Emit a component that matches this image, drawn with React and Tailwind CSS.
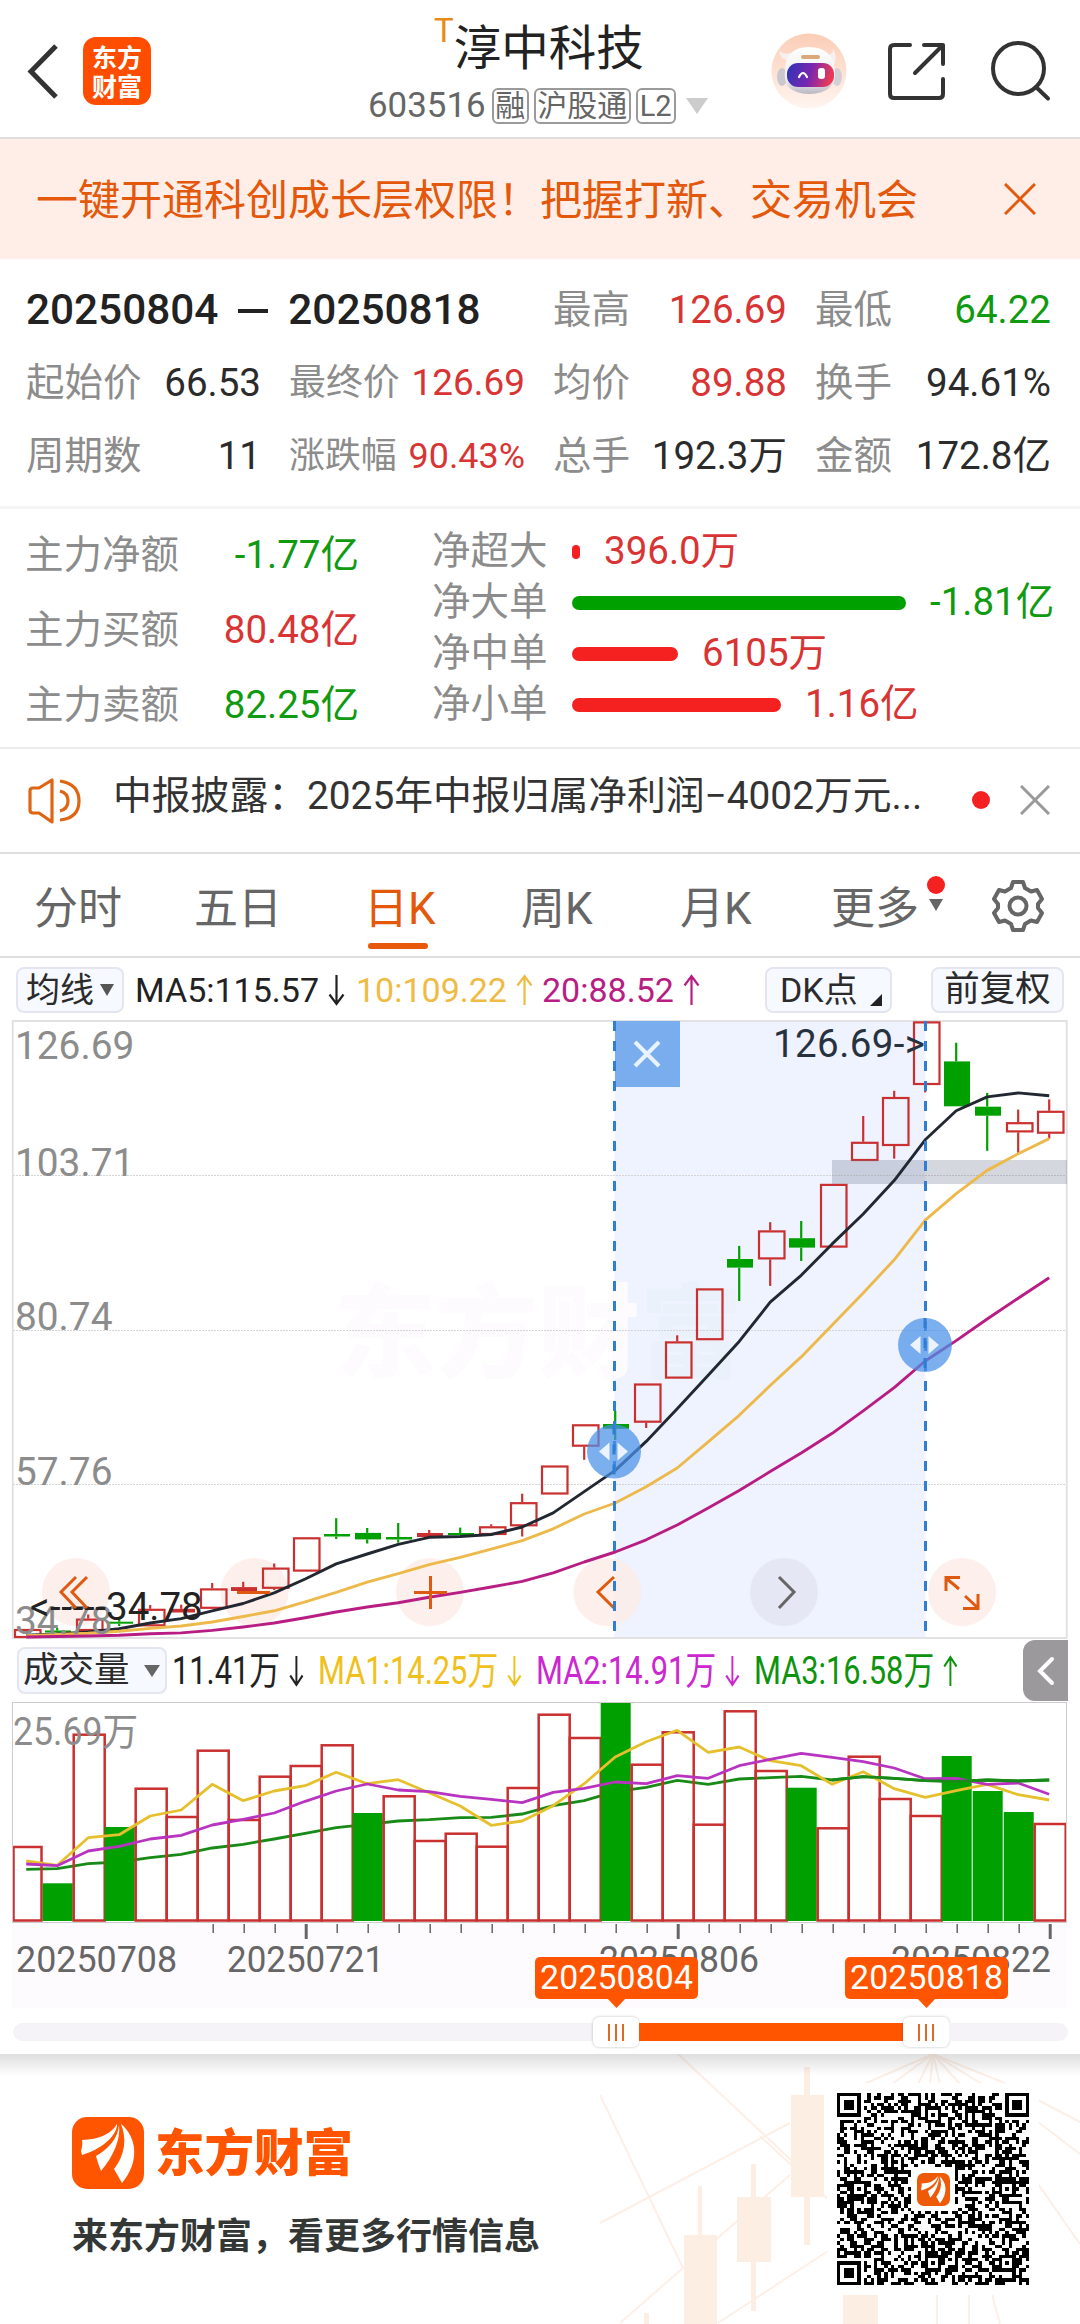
import { useMemo } from 'react'

const STEP = 31
const FIRST_X = 26.2
const cx = (i) => FIRST_X + i * STEP
const toPoints = (values) => values.map((y, i) => `${cx(i)},${y}`).join(' ')

// [type, bodyTop, bodyBottom, wickTop, wickBottom]
const candles = [
  ['up', 609, 618], ['down', 610.5, 612.5, 608, 615], ['up', 598.6, 611, 594.5, 611], ['down', 601.7, 603.7, 598, 606],
  ['up', 588.8, 606.3, 585, 606], ['bar', 588.8, 592.5, 584.7, 592], ['up', 568.4, 588.8, 563, 588], ['bar', 567.1, 571, 561.8, 571],
  ['up', 547.6, 568.8, 543.5, 570], ['up', 517.3, 551.6], ['down', 514, 516.5, 498.2, 519], ['down', 512.9, 519.4, 508, 523.5],
  ['down', 517, 519.5, 503, 522.7], ['bar', 513, 517, 510, 517], ['down', 513, 515, 507.6, 515], ['up', 506.3, 515, 504.3, 506],
  ['up', 482.2, 506.3, 473.7, 516.5], ['up', 445.5, 474.5], ['up', 404.3, 426.7, 404.3, 439.8], ['down', 404, 408.8, 390.8, 420],
  ['up', 363.5, 402.7, 363.5, 408], ['up', 321.4, 358.6, 315.3, 358], ['up', 268.4, 320.2], ['down', 239, 247.6, 225.9, 281],
  ['up', 210.4, 239.4, 202.2, 265.9], ['down', 218.2, 227.6, 201, 241], ['up', 163.9, 227.6], ['up', 121.8, 141, 96, 141],
  ['up', 77, 126, 70.8, 138.6], ['up', 1.4, 65, 1.4, 72.4], ['down', 41.4, 86.3, 22.7, 86], ['down', 86.7, 95.7, 72.9, 130.8],
  ['up', 102.2, 112.4, 89.6, 132.9], ['up', 90.8, 113.7, 79.4, 118.6],
]

const ma5 = [615.3, 614, 612, 608.8, 603, 598.6, 590.8, 583.5, 572.9, 559, 543.9, 534, 524.3, 517.3, 516.5, 514.5, 507, 492.9, 471.6, 450.4, 421.4, 388.8, 355.3, 321.4, 282.2, 255.3, 223.9, 194, 160.6, 119.8, 90.8, 76.9, 72.9, 75.7]
const ma10 = [615.7, 614.5, 613.3, 611.2, 608.4, 606, 602, 596.5, 590.8, 581.8, 572.4, 562.2, 553.7, 544.7, 537.3, 529.2, 520.6, 508.8, 494, 483, 466.7, 448, 421.8, 395.3, 365.5, 336.9, 305, 272.9, 239.8, 200.2, 173.7, 150.4, 133.7, 118.6]
const ma20 = [617, 616.5, 616, 615.3, 613.7, 612.9, 610.4, 607, 603, 597.8, 592, 587, 582.7, 577.3, 572.4, 567, 561.4, 552.9, 542, 532, 519.8, 505, 488, 470.4, 451.6, 433, 413.3, 390.8, 367.6, 341, 320.6, 299, 278.2, 257.8]

const volumes = [146, 183.3, 33.7, 127, 87.7, 116, 49.7, 119, 75.7, 65, 44.3, 113, 95.3, 140, 132.7, 145.7, 87, 13.7, 37, 3, 63.7, 31.3, 123.7, 10.3, 70, 87.7, 127.3, 55.7, 98, 115, 56, 91, 112, 123]
const volumeDown = [1, 3, 11, 19, 25, 30, 31, 32]
const vma1 = [161, 165.3, 137.7, 134.7, 116, 110, 84.3, 100.7, 91, 85.7, 72.3, 83.7, 79.7, 92.7, 106, 125.3, 121, 105.7, 83.7, 57, 41.7, 30.3, 52.3, 47, 60.7, 65.7, 84.3, 71.7, 88.7, 97.3, 90.7, 84.3, 94.7, 100]
const vma2 = [164, 165.7, 151, 146.3, 139, 135.3, 125, 119.3, 113, 101.3, 91, 84, 90, 91.7, 96.3, 99.3, 102.7, 92.3, 88.3, 82, 83.7, 75.7, 78.3, 65.7, 59.3, 53.3, 57.3, 61.7, 68, 78.7, 78.3, 84.3, 83, 94.3]
const vma3 = [169.3, 168.7, 163.7, 162, 157.7, 154.3, 148, 144.3, 139, 133.3, 127.7, 124.3, 121, 119.7, 117.7, 117.3, 114, 105.7, 100.7, 91.7, 87.3, 80.3, 84.3, 79, 77.7, 76.3, 80, 76.7, 78.3, 80.7, 81.3, 80, 81, 80]

const RED = '#c9302f'
const GREEN = '#00a000'

const Arrow = ({ up, className = '' }) => (
  <svg width="17" height="32" viewBox="0 0 17 32" className={`shrink-0 ${className}`} fill="none" stroke="currentColor" strokeWidth="2.2">
    {up ? <path d="M8.5 31V2M1.500 11.500L8.500 2L15.500 11.500" /> : <path d="M8.500 1V30M1.500 20.500L8.500 30L15.500 20.500" />}
  </svg>
)

const BrandMark = ({ size, color = '#ff5400', className = '' }) => (
  <svg width={size} height={size} viewBox="0 0 72 72" className={className}>
    <rect width="72" height="72" rx="15" fill={color} />
    <path d="M45 7C46 15 34 31 10 38L9 34Q11 27 10 23Q36 22 45 7Z" fill="#fff" />
    <path d="M47 8C49 22 41 40 29 54C27 49 25 43 24 39C35 33 46 22 47 8Z" fill="#fff" />
    <path d="M49 7C65 20 68 45 50 66L42 52C53 38 55 22 49 7Z" fill="#fff" />
  </svg>
)

const Robot = () => (
  <svg width="76" height="76" viewBox="0 0 76 76">
    <defs>
      <linearGradient id="halo" x1="0" y1="0" x2="0" y2="1">
        <stop offset="0" stopColor="#fbcdb6" />
        <stop offset="1" stopColor="#fff5f0" />
      </linearGradient>
      <linearGradient id="visor" x1="0" y1="0" x2="1" y2="0.15">
        <stop offset="0" stopColor="#2c35b8" />
        <stop offset="0.55" stopColor="#7b26b0" />
        <stop offset="1" stopColor="#ea3a58" />
      </linearGradient>
      <linearGradient id="helmet" x1="0" y1="0" x2="0" y2="1">
        <stop offset="0" stopColor="#fff" />
        <stop offset="0.7" stopColor="#efedf0" />
        <stop offset="1" stopColor="#b9b6c2" />
      </linearGradient>
    </defs>
    <circle cx="38" cy="38" r="37.5" fill="url(#halo)" />
    <ellipse cx="11" cy="44" rx="5" ry="9" fill="#cbc7cf" />
    <ellipse cx="66" cy="44" rx="5" ry="9" fill="#d3cfd6" />
    <path d="M8 18Q10 28 18 27L20 20Q12 22 8 18ZM62 16Q67 24 63 32L56 22Q62 22 62 16Z" fill="#f6f1f1" />
    <path d="M14 38Q14 14 38 14Q62 14 64 38Q66 60 38 61Q11 60 14 38Z" fill="url(#helmet)" />
    <rect x="30" y="22" width="19" height="4" rx="2" fill="#dba878" />
    <rect x="16" y="30" width="47" height="24" rx="11" fill="url(#visor)" />
    <path d="M28 44Q32 36 36 44" stroke="#fff" strokeWidth="2.2" fill="none" strokeLinecap="round" />
    <rect x="47" y="35" width="7" height="11" rx="3" fill="#fff" />
  </svg>
)

const Header = () => (
  <header className="flex h-[139px] border-b-2 border-[#dedede]">
    <div className="flex w-[368px] items-start pt-[37px] pl-[27px]">
      <svg width="32" height="68" viewBox="0 0 32 68" fill="none" stroke="#333" strokeWidth="5">
        <path d="M29 9L4 34.500L29 60" />
      </svg>
      <div className="ml-6 flex h-[68px] w-[68px] flex-col items-center justify-center rounded-[13px] bg-[#ff4d00] font-['Noto_Sans_CJK_SC'] text-[25px] leading-[29px] font-bold text-white">
        <span>东方</span>
        <span>财富</span>
      </div>
    </div>
    <div className="w-[403px]">
      <div className="flex items-start pl-[66px]">
        <span className="mt-[14px] text-[33px] leading-[34px] text-[#e88a1a]">T</span>
        <h1 className="mt-[19px] text-[47.500px] leading-[60px] text-[#222]">淳中科技</h1>
      </div>
      <div className="mt-[8px] flex h-[37px] items-center text-[34.900px] leading-[36px] text-[#666]">
        <span className="mr-[6px]">603516</span>
        <span className="mr-[5px] flex h-9 w-[37px] items-center justify-center rounded-md border-2 border-[#9a9a9a] text-[30px]">融</span>
        <span className="mr-[5px] flex h-9 w-[97px] items-center justify-center rounded-md border-2 border-[#9a9a9a] text-[30px]">沪股通</span>
        <span className="flex h-9 w-[40px] items-center justify-center rounded-md border-2 border-[#9a9a9a] text-[29px]">L2</span>
        <svg width="22" height="16" viewBox="0 0 22 16" className="ml-[10px]">
          <path d="M0 0H22L11 16Z" fill="#ccc" />
        </svg>
      </div>
    </div>
    <div className="flex items-start pt-[33px]">
      <Robot />
      <svg width="60" height="60" viewBox="0 0 60 60" className="mt-[9px] ml-[40px]" fill="none" stroke="#333" strokeWidth="4" strokeLinecap="round" strokeLinejoin="round">
        <path d="M23 3H7Q3 3 3 7V52Q3 56 7 56H52Q56 56 56 52V37M37 3H56V22M55 4L28 31" />
      </svg>
      <svg width="62" height="62" viewBox="0 0 62 62" className="mt-[7px] ml-[43px]" fill="none" stroke="#333" strokeWidth="4" strokeLinecap="round">
        <circle cx="28.500" cy="28.500" r="25.500" />
        <path d="M46 47L58 58.500" />
      </svg>
    </div>
  </header>
)

const Banner = () => (
  <div className="flex h-[120px] items-center justify-between bg-[#feeee7] pt-[2px] pr-[44px] pl-9">
    <span className="text-[42px] whitespace-nowrap text-[#e4580c]">一键开通科创成长层权限！把握打新、交易机会</span>
    <svg width="32" height="32" viewBox="0 0 32 32" stroke="#e4580c" strokeWidth="3" className="mt-[-3px]">
      <path d="M1 1L31 31M31 1L1 31" />
    </svg>
  </div>
)

const Stat = ({ label, value, color = 'text-[#2b2b2b]', size = 'text-[38.500px]' }) => (
  <div className={`flex items-center justify-between ${size}`}>
    <span className="text-[#8c8c8c]">{label}</span>
    <span className={color}>{value}</span>
  </div>
)

const Stats = () => (
  <section className="grid h-[250px] grid-cols-[235px_236px_234px_236px] grid-rows-[73px_73px_73px] content-start gap-x-[28px] border-b-[3px] border-[#f5f5f5] pt-[15px] pl-[26px] leading-none whitespace-nowrap">
    <div className="col-span-2 flex items-center text-[42.300px] font-medium text-[#222]">
      <span>20250804</span>
      <span className="mx-[20px] h-[4px] w-[30px] bg-[#222]" />
      <span>20250818</span>
    </div>
    <Stat label="最高" value="126.69" color="text-[#d93434]" />
    <Stat label="最低" value="64.22" color="text-[#109a10]" />
    <Stat label="起始价" value="66.53" />
    <Stat label="最终价" value="126.69" color="text-[#d93434]" size="text-[36.900px]" />
    <Stat label="均价" value="89.88" color="text-[#d93434]" />
    <Stat label="换手" value="94.61%" />
    <Stat label="周期数" value="11" />
    <Stat label="涨跌幅" value="90.43%" color="text-[#d93434]" size="text-[35.900px]" />
    <Stat label="总手" value="192.3万" />
    <Stat label="金额" value="172.8亿" />
  </section>
)

const orders = [
  { label: '净超大', value: '396.0万', width: 8, down: false },
  { label: '净大单', value: '-1.81亿', width: 334, down: true },
  { label: '净中单', value: '6105万', width: 106, down: false },
  { label: '净小单', value: '1.16亿', width: 209, down: false },
]

const Flow = () => (
  <section className="flex h-[240px] border-b-2 border-[#ececec] text-[38.500px] leading-none whitespace-nowrap">
    <div className="grid w-[359px] grid-rows-[75px_75px_75px] pt-[9px] pl-[25px]">
      <Stat label="主力净额" value="-1.77亿" color="text-[#109a10]" />
      <Stat label="主力买额" value="80.48亿" color="text-[#d93434]" />
      <Stat label="主力卖额" value="82.25亿" color="text-[#109a10]" />
    </div>
    <div className="grid grid-rows-[51px_51px_51px_51px] pt-[17px] pl-[73px]">
      {orders.map((o) => (
        <div key={o.label} className="flex items-center">
          <span className="w-[140px] text-[#8c8c8c]">{o.label}</span>
          <span className={`h-[14px] rounded-full ${o.down ? 'bg-[#00a000]' : 'bg-[#f52020]'}`} style={{ width: o.width }} />
          <span className={`ml-[24px] ${o.down ? 'text-[#109a10]' : 'text-[#d93434]'}`}>{o.value}</span>
        </div>
      ))}
    </div>
  </section>
)

const Notice = () => (
  <div className="flex h-[105px] items-center border-b-2 border-[#dedede] pl-[28px]">
    <svg width="54" height="46" viewBox="0 0 54 46" fill="none" stroke="#df6413" strokeWidth="3.200" strokeLinejoin="round">
      <path d="M2 13Q2 10 5 10H11L24 2V44L11 35H5Q2 35 2 32Z" />
      <path d="M32 13Q40 15 40 23Q40 31 32 33M32 3Q51 6 51 23Q51 40 32 42" />
    </svg>
    <span className="mt-[-8px] ml-[31px] w-[859px] text-[38.800px] whitespace-nowrap text-[#333]">中报披露：2025年中报归属净利润−4002万元...</span>
    <span className="mt-[-2px] h-[18px] w-[18px] rounded-full bg-[#f52020]" />
    <svg width="30" height="30" viewBox="0 0 30 30" stroke="#999" strokeWidth="3" className="mt-[-2px] ml-[30px]">
      <path d="M1 1L29 29M29 1L1 29" />
    </svg>
  </div>
)

const Tabs = () => (
  <nav className="flex h-[104px] items-start border-b-2 border-[#dedede] pt-[24px] pl-[34px] text-[44px] leading-[62px] whitespace-nowrap text-[#666]">
    <span className="w-[160px]">分时</span>
    <span className="w-[170px]">五日</span>
    <span className="flex w-[157px] flex-col text-[#e4580c]">
      日K
      <span className="mt-[3px] ml-[4px] h-[6px] w-[60px] rounded-full bg-[#e8580a]" />
    </span>
    <span className="w-[159px]">周K</span>
    <span className="w-[151px]">月K</span>
    <span>更多</span>
    <span className="mt-[-2px] ml-[8px] flex flex-col items-center">
      <span className="h-[18px] w-[18px] rounded-full bg-[#f52020]" />
      <svg width="14" height="12" viewBox="0 0 14 12" className="mt-[5px]">
        <path d="M0 0H14L7 12Z" fill="#666" />
      </svg>
    </span>
    <svg width="52" height="54" viewBox="0 0 52 54" className="mt-[1px] ml-[47px]" fill="none" stroke="#666" strokeWidth="4" strokeLinejoin="round">
      <path d="M21 3H31L33 9L39 12.500L45 11L50 20L46 25V29L50 34L45 43L39 41.500L33 45L31 51H21L19 45L13 41.500L7 43L2 34L6 29V25L2 20L7 11L13 12.500L19 9Z" />
      <circle cx="26" cy="27" r="8.500" />
    </svg>
  </nav>
)

const Indicators = () => (
  <div className="mt-px flex h-[61px] items-center pl-4 text-[34px] leading-none whitespace-nowrap">
    <div className="flex h-[46px] w-[108px] items-center rounded-lg border-2 border-[#e4e5f0] bg-[#f6f9ff] pl-[8px] text-[#2b2b2b]">
      均线
      <svg width="14" height="12" viewBox="0 0 14 12" className="ml-[6px]">
        <path d="M0 0H14L7 12Z" fill="#555" />
      </svg>
    </div>
    <div className="ml-[11px] flex w-[221px] items-center text-[#222]">
      MA5:115.57<Arrow className="ml-[9px]" />
    </div>
    <div className="flex w-[186px] items-center text-[#efbb45]">
      10:109.22<Arrow up className="ml-[9px]" />
    </div>
    <div className="flex w-[223px] items-center text-[#b81d83]">
      20:88.52<Arrow up className="ml-[9px]" />
    </div>
    <div className="flex h-[46px] w-[127px] items-center rounded-lg border-2 border-[#e4e5f0] bg-[#f6f9ff] pl-[13px] text-[#2b2b2b]">
      DK点
      <svg width="12" height="12" viewBox="0 0 12 12" className="mt-[20px] ml-[12px]">
        <path d="M12 0V12H0Z" fill="#222" />
      </svg>
    </div>
    <div className="ml-[39px] flex h-[46px] w-[133px] items-center justify-center rounded-lg border-2 border-[#e4e5f0] bg-[#f6f9ff] text-[35.500px] text-[#2b2b2b]">前复权</div>
  </div>
)

const Candle = ({ i, data }) => {
  const [type, top, bottom, high, low] = data
  const x = cx(i)
  const color = type === 'down' ? GREEN : RED
  return (
    <g stroke={color} strokeWidth="2.2">
      {high !== undefined && high < top && <path d={`M${x} ${high}V${top}`} />}
      {low !== undefined && low > bottom && <path d={`M${x} ${bottom}V${low}`} />}
      {type === 'up' ? (
        <rect x={x - 11.2} y={top + 1} width="25.500" height={bottom - top - 2} fill="none" />
      ) : (
        <rect x={x - 12.2} y={top} width="26" height={bottom - top} fill={color} stroke="none" />
      )}
    </g>
  )
}

const DragHandle = ({ x, y }) => (
  <g transform={`translate(${x} ${y})`}>
    <circle r="27" fill="#4a90e8" fillOpacity="0.72" />
    <path d="M-4.500 -9V9L-15 0ZM3.500 -9V9L14 0Z" fill="#eaf3ff" />
    <path d="M0 -27V27" stroke="#2f7ed2" strokeWidth="3" strokeDasharray="10 10" />
  </g>
)

const PriceChart = () => (
  <svg width="1080" height="620" viewBox="0 0 1080 620" className="block overflow-visible" fontFamily="Roboto, 'Noto Sans CJK SC', sans-serif">
    <rect x="614.500" y="1" width="311" height="617" fill="#eef3ff" />
    <text x="334" y="350" fontSize="102" fontWeight="900" fontFamily="'Noto Sans CJK SC', sans-serif">
      <tspan fill="#fefbfe">东方财</tspan>
      <tspan fill="#eaf1fa">富</tspan>
    </text>
    <g stroke="#d4d4d6" strokeWidth="1" strokeDasharray="2 1">
      <path d="M13 155.500H1067M13 310.500H1067M13 464.500H1067" />
    </g>
    <rect x="12.750" y="1" width="1054" height="617" fill="none" stroke="#dfdfe1" strokeWidth="1.800" />
    <g fill="#fdece7" fillOpacity="0.8">
      {[76, 254.5, 430, 607.5, 962].map((x) => (
        <circle key={x} cx={x} cy="572" r="34" />
      ))}
      <circle cx="784" cy="572" r="34" fill="#e4e4f2" />
    </g>
    {candles.map((c, i) => (
      <Candle key={i} i={i} data={c} />
    ))}
    <rect x="832" y="140" width="235" height="24" fill="#737b91" fillOpacity="0.3" />
    <g fill="none" strokeWidth="2.900" strokeLinejoin="round">
      <polyline points={toPoints(ma5)} stroke="#222831" />
      <polyline points={toPoints(ma10)} stroke="#edb94a" />
      <polyline points={toPoints(ma20)} stroke="#b81d83" />
    </g>
    <g fontSize="38.800" fill="#8c8c8c">
      <text x="15" y="39">126.69</text>
      <text x="15" y="155.500">103.71</text>
      <text x="15" y="309.500">80.74</text>
      <text x="15" y="464.500">57.76</text>
      <text x="15" y="614">34.78</text>
    </g>
    <text x="30" y="600" fontSize="38.500" fill="#222">
      {'<'}
      <tspan x="50" textLength="56">-----</tspan>
      <tspan x="106">34.78</tspan>
    </text>
    <g fill="none" stroke="#df5a10" strokeWidth="3">
      <path d="M76 557L61 572L76 588M87 557L72 572L87 588" />
      <path d="M237 572.500H270M414 572.500H447M430.500 556V589" />
      <path d="M614 557L598 572L614 588" />
      <path d="M959 569L946 558M946 571V557.500H960M965 576L978 588M978 574V588.500H963" />
      <path d="M779 557L794 572L779 588" stroke="#666" />
    </g>
    <text x="773" y="37" fontSize="38.500" fill="#28323e" textLength="152">{'126.69->'}</text>
    <rect x="615" y="1" width="65" height="66" fill="#7aadee" />
    <path d="M635 22L659 46M659 22L635 46" stroke="#e8f3ff" strokeWidth="4" />
    <g stroke="#2f7ed2" strokeWidth="3" strokeDasharray="10 10">
      <path d="M614.500 1V618M925.500 1V618" />
    </g>
    <DragHandle x={614} y={431.5} />
    <DragHandle x={925} y={325} />
  </svg>
)

const Squeezed = ({ children, className }) => (
  <div className={`flex items-center ${className}`}>
    <div className="flex origin-left scale-x-[0.8] items-center">{children}</div>
  </div>
)

const VolumeBar = () => (
  <div className="flex h-[60px] items-start pl-[17px] text-[38.500px] leading-none whitespace-nowrap">
    <div className="mt-[7px] flex h-[47px] w-[150px] items-center rounded-lg border-2 border-[#e4e5f0] bg-[#f6f9ff] pl-[4px] text-[35.500px] text-[#2b2b2b]">
      成交量
      <svg width="16" height="12" viewBox="0 0 16 12" className="ml-[14px]">
        <path d="M0 0H16L8 12Z" fill="#666" />
      </svg>
    </div>
    <Squeezed className="ml-[5px] h-[62px] w-[146px] text-[#222]">11.41万<Arrow className="ml-[12px] scale-x-110" /></Squeezed>
    <Squeezed className="h-[62px] w-[218px] text-[#f0c01c]">MA1:14.25万<Arrow className="ml-[12px] scale-x-110" /></Squeezed>
    <Squeezed className="h-[62px] w-[218px] text-[#cb28cf]">MA2:14.91万<Arrow className="ml-[12px] scale-x-110" /></Squeezed>
    <Squeezed className="h-[62px] w-[269px] text-[#0e930e]">MA3:16.58万<Arrow up className="ml-[12px] scale-x-110" /></Squeezed>
    <div className="flex h-[61px] w-[45px] items-center justify-center rounded-l-xl bg-[#9b999c]">
      <svg width="18" height="30" viewBox="0 0 18 30" fill="none" stroke="#fff" strokeWidth="4" strokeLinecap="round">
        <path d="M15 3L3 15L15 27" />
      </svg>
    </div>
  </div>
)

const VolumeChart = () => (
  <svg width="1080" height="308" viewBox="0 0 1080 308" className="block" fontFamily="Roboto, 'Noto Sans CJK SC', sans-serif">
    <rect x="12" y="223" width="1055" height="85" fill="#fdfbfe" />
    <polyline points={toPoints(vma3)} fill="none" stroke="#178a17" strokeWidth="2.800" />
    {volumes.map((top, i) => {
      const x = cx(i) - 15
      return volumeDown.includes(i) ? (
        <rect key={i} x={x + 0.5} y={top} width="30" height={221 - top} fill={GREEN} />
      ) : (
        <rect key={i} x={Math.max(x + 0.5, 13.5)} y={top + 1} width={i ? 31 : 28} height={219.5 - top} fill="none" stroke={RED} strokeWidth="2.500" />
      )
    })}
    <rect x="12.500" y="2.500" width="1054" height="220" fill="none" stroke="#ccc" strokeWidth="1" />
    <g fill="none" strokeWidth="2.800" strokeLinejoin="round">
      <polyline points={toPoints(vma1)} stroke="#e6c02c" />
      <polyline points={toPoints(vma2)} stroke="#b834c0" />
      <polyline points={toPoints(vma3).split(' ').slice(26).join(' ')} stroke="#178a17" />
    </g>
    <g stroke="#666">
      {Array.from({ length: 28 }, (_, k) => k + 6).map((i) => {
        const major = i === 9 || i === 21 || i === 33
        return <path key={i} d={`M${cx(i) + 1} 224V${major ? 239 : 233}`} strokeWidth={major ? 3 : 1.5} />
      })}
    </g>
    <text x="13" y="45" fontSize="38" fill="#8c8c8c" textLength="125" lengthAdjust="spacingAndGlyphs">25.69万</text>
    <g fontSize="36" fill="#666">
      <text x="16" y="271.500" textLength="161" lengthAdjust="spacingAndGlyphs">20250708</text>
      <text x="227" y="271.500" textLength="157" lengthAdjust="spacingAndGlyphs">20250721</text>
      <text x="599" y="271.500" textLength="160" lengthAdjust="spacingAndGlyphs">20250806</text>
      <text x="891" y="271.500" textLength="160" lengthAdjust="spacingAndGlyphs">20250822</text>
    </g>
    <g fill="#ff5400">
      <rect x="535" y="257" width="163" height="42" rx="5" />
      <path d="M607 298H626L616.500 308Z" />
      <rect x="845" y="257" width="163" height="42" rx="5" />
      <path d="M917 298H936L926.500 308Z" />
    </g>
    <g fontSize="33.800" fill="#fff">
      <text x="540" y="289" textLength="153">20250804</text>
      <text x="850" y="289" textLength="153">20250818</text>
    </g>
  </svg>
)

const Grip = () => (
  <span className="flex h-[30px] w-[46px] items-center justify-center gap-[5px] rounded-md bg-white shadow-[0_0_3px_rgba(0,0,0,0.25)]">
    <span className="h-[17px] w-[2px] bg-[#e06a25]" />
    <span className="h-[17px] w-[2px] bg-[#e06a25]" />
    <span className="h-[17px] w-[2px] bg-[#e06a25]" />
  </span>
)

const RangeSlider = () => (
  <div className="flex h-[46px] items-center pt-[2px] pr-3 pl-[13px]">
    <span className="h-[18px] w-[580px] rounded-l-full bg-[#f5f3f7]" />
    <Grip />
    <span className="h-[18px] w-[264px] bg-[#ff5400]" />
    <Grip />
    <span className="h-[18px] flex-1 rounded-r-full bg-[#f5f3f7]" />
  </div>
)

const QR_SIZE = 57

const finderCell = (x, y) => {
  const ring = Math.max(Math.abs(x - 3), Math.abs(y - 3))
  return ring === 3 || ring <= 1
}

const buildQr = () => {
  const cells = []
  let seed = 20250818
  for (let y = 0; y < QR_SIZE; y++) {
    for (let x = 0; x < QR_SIZE; x++) {
      seed = (seed * 1664525 + 1013904223) % 4294967296
      let on = seed / 4294967296 > 0.5
      const fx = x > 48 ? x - 50 : x
      const fy = y > 48 ? y - 50 : y
      const inCorner = fx < 8 && fy < 8 && !(x > 48 && y > 48)
      if (inCorner) {
        on = fx >= 0 && fy >= 0 && fx < 7 && fy < 7 && finderCell(fx, fy)
      } else {
        for (const ay of [6, 28, 50]) {
          for (const ax of [6, 28, 50]) {
            const ring = Math.max(Math.abs(x - ax), Math.abs(y - ay))
            const corner = (ax === 6 && ay !== 28) || (ax === 50 && ay === 6)
            if (!corner && ring <= 2) on = ring !== 1
          }
        }
      }
      if (Math.abs(x - 28) <= 6 && Math.abs(y - 28) <= 6) on = false
      if (on) cells.push(`M${x} ${y}h1v1h-1z`)
    }
  }
  return cells.join('')
}

const QrCode = () => {
  const path = useMemo(buildQr, [])
  return (
    <div className="relative h-[212px] w-[212px] bg-white p-[10px]">
      <svg width="192" height="192" viewBox="0 0 57 57" shapeRendering="crispEdges">
        <path d={path} fill="#000" />
      </svg>
      <BrandMark size={33} color="#ee5a08" className="absolute top-[90px] left-[90px]" />
    </div>
  )
}

const FooterArt = () => (
  <svg width="480" height="270" viewBox="0 0 480 270" className="absolute right-0 bottom-0">
    <g stroke="#fdefe6" strokeWidth="2" fill="none">
      <path d="M78 0L191 106M0 41L83 214M0 169L190 69M20 269L83 214L190 121M118 269L228 197M160 82L228 145" />
      <path d="M333 0L264 30M333 0L292 30M333 0L318 30M333 0L330 30M333 0L340 30M333 0L360 30M333 0L382 30M333 0L407 30" />
      <path d="M438 46L480 68M438 68L480 100M438 130L480 190M337 240V270M369 240V270M392 240L400 270" />
    </g>
    <g fill="#fdeee4">
      <path d="M98 132h4v49h15v89H84v-89h14z" />
      <path d="M151 110h5v33h15v65h-15v49h-5v-49h-14v-65h14z" />
      <path d="M204 13h6v28h14v102h-14v48h-6v-48h-13V41h13z" />
      <path d="M243 240h35v30h-35zM44 259h5v11h-5z" />
    </g>
  </svg>
)

const Footer = () => (
  <footer className="relative flex h-[270px] justify-between bg-white pr-[41px] pl-[72px]">
    <FooterArt />
    <div className="absolute inset-x-0 top-0 h-[22px] bg-linear-to-b from-black/13 to-transparent" />
    <div className="relative pt-[63px]">
      <div className="flex items-start">
        <BrandMark size={72} />
        <span className="mt-[-3px] ml-[11px] font-['Noto_Sans_CJK_SC'] text-[49.500px] leading-[72px] font-black text-[#ff5400]">东方财富</span>
      </div>
      <p className="mt-[21px] font-['Noto_Sans_CJK_SC'] text-[36px] leading-[46px] font-bold whitespace-nowrap text-[#333836]">来东方财富，看更多行情信息</p>
    </div>
    <div className="relative pt-[29px]">
      <QrCode />
    </div>
  </footer>
)

const App = () => {
  return (
    <div className="h-[2324px] w-[1080px] overflow-hidden bg-white font-[Roboto,'Noto_Sans_CJK_SC',sans-serif]">
      <Header />
      <Banner />
      <Stats />
      <Flow />
      <Notice />
      <Tabs />
      <Indicators />
      <PriceChart />
      <VolumeBar />
      <VolumeChart />
      <RangeSlider />
      <Footer />
    </div>
  )
}

export default App
